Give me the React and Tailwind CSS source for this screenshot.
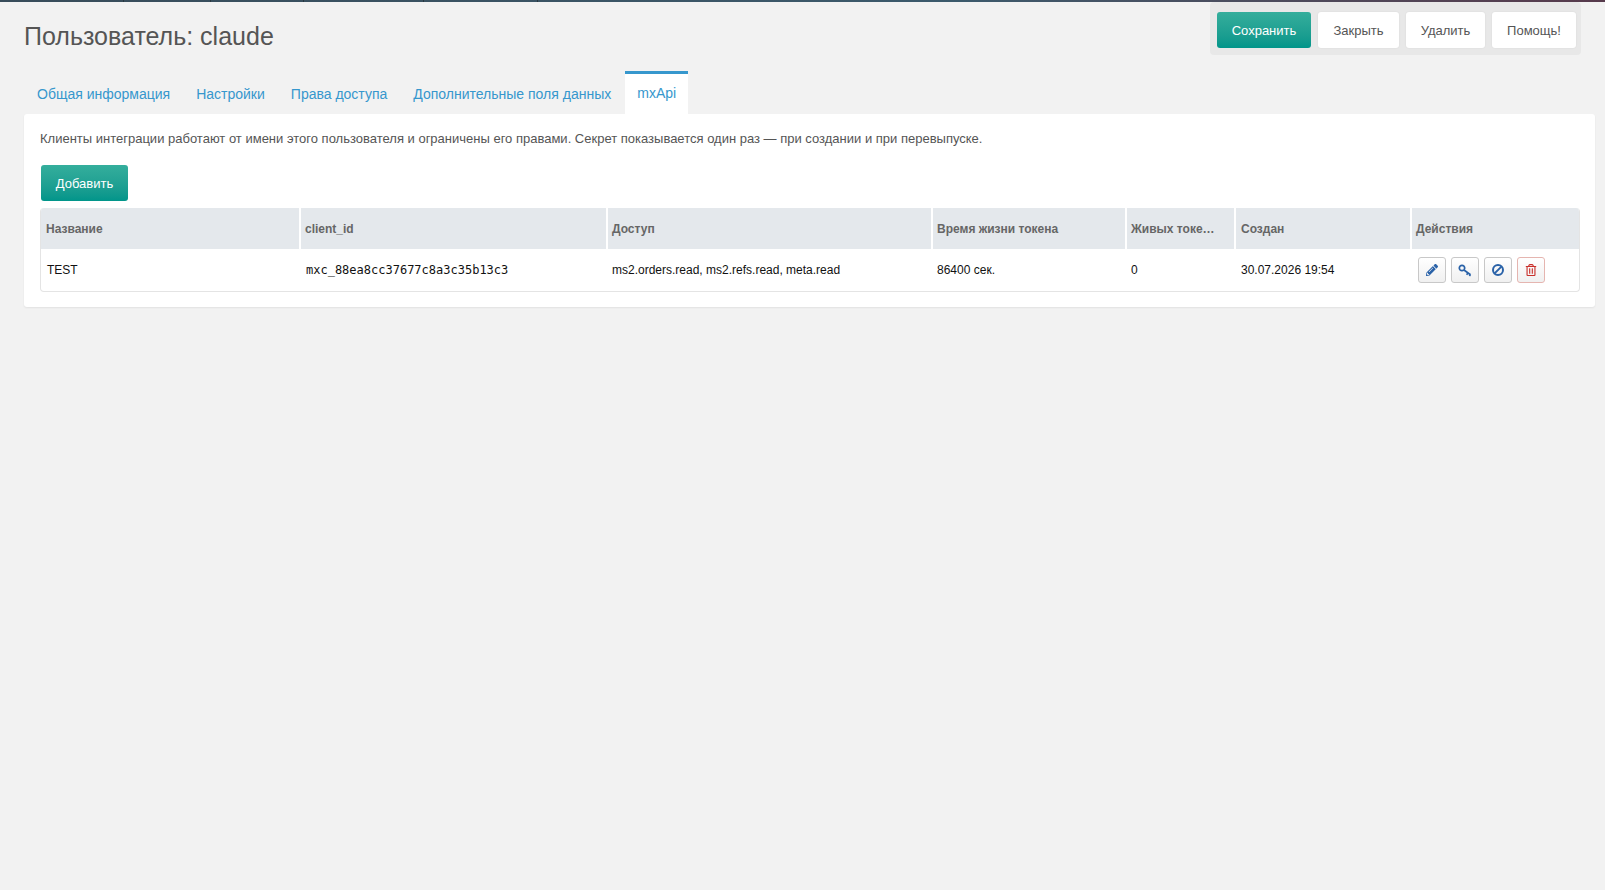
import React from "react";
import { FaPencilAlt, FaRegTrashAlt } from "react-icons/fa";
const Btn=({children,primary,cls=""})=>(
  <button className={`h-9 shrink-0 rounded-[3px] text-[13px] leading-none ${primary?"bg-gradient-to-b from-[#34ae9c] to-[#00958a] text-white":"bg-white text-[#555555] shadow-[0_0_2px_rgba(0,0,0,0.08)]"} ${cls}`}>{children}</button>
);
const IconBtn=({children,red})=>(
  <button className={`w-[28px] h-[26px] shrink-0 rounded-[3px] border flex items-center justify-center bg-gradient-to-b from-white to-[#f0f0f0] ${red?"border-[#e5b5b0]":"border-[#c8c8c8]"}`}>{children}</button>
);
const heads=[["Название","w-[260px] pl-[5px]"],["client_id","w-[307px] pl-[4px]"],["Доступ","w-[325px] pl-[4px]"],["Время жизни токена","w-[194px] pl-[4px]"],["Живых токе…","w-[109px] pl-[4px]"],["Создан","w-[176px] pl-[5px]"],["Действия","flex-1 pl-[4px]"]];
export default function App(){
  return (
    <div className="min-h-[890px] bg-[#f2f2f2] font-['Liberation_Sans',Arial,sans-serif] relative">
      <div className="h-[2px] flex bg-gradient-to-r from-[#384c5a] via-[#3c5a6c] via-60% to-[#573a4c]">
        {[124,87,93,120,114].map((w,i)=>(
          <div key={i} style={{width:w}} className="h-full border-r border-[#2a3840]"/>
        ))}
      </div>
      <div className="flex justify-between pl-6 pr-[24px]">
        <h1 className="text-[25px] leading-[30px] text-[#555555] mt-[19px]">Пользователь: claude</h1>
        <div className="flex gap-[7px] bg-[#e8e8e8] rounded-[4px] pt-[10px] pb-[7px] pl-[7px] pr-[5px] h-[53px] w-[371px]">
          <Btn primary cls="w-[94px]">Сохранить</Btn>
          <Btn cls="w-[81px]">Закрыть</Btn>
          <Btn cls="w-[79px]">Удалить</Btn>
          <Btn cls="w-[84px]">Помощь!</Btn>
        </div>
      </div>
      <div className="flex pl-6 mt-[16px] h-[43px] items-stretch text-[14px] text-[#3697cd]">
        <div className="w-[13px]"/>
        <div className="pt-[13px] mr-[26px]">Общая информация</div>
        <div className="pt-[13px] mr-[26px]">Настройки</div>
        <div className="pt-[13px] mr-[26px]">Права доступа</div>
        <div className="pt-[13px] mr-[14px]">Дополнительные поля данных</div>
        <div className="bg-white border-t-[3px] border-[#3697cd] px-[12px] pt-[9px]">mxApi</div>
      </div>
      <div className="ml-6 mr-[10px] bg-white rounded-[3px] shadow-[0_1px_2px_rgba(0,0,0,0.07)] px-[17px] pt-[17px] pb-[16px] h-[193px]">
        <p className="text-[13px] leading-[16px] text-[#555555] -ml-[1px]">Клиенты интеграции работают от имени этого пользователя и ограничены его правами. Секрет показывается один раз — при создании и при перевыпуске.</p>
        <Btn primary cls="w-[87px] mt-[18px] block">Добавить</Btn>
        <div className="mt-[7px] border border-[#e4e4e4] border-t-0 rounded-[4px] overflow-hidden h-[84px] text-[12px] -ml-[1px] -mr-[2px]">
          <div className="flex h-[41px] bg-[#e4e8ec] font-bold text-[#666666]">
            {heads.map(([h,w],i)=>(
              <div key={h} className={`${w} flex items-center ${i<6?"border-r-2 border-white":""}`}>{h}</div>
            ))}
          </div>
          <div className="flex h-[42px] items-center text-[#111111]">
            <div className="w-[259px] pl-[6px]">TEST</div>
            <div className="w-[307px] pl-[6px] font-['DejaVu_Sans_Mono',monospace]">mxc_88ea8cc37677c8a3c35b13c3</div>
            <div className="w-[325px] pl-[5px]">ms2.orders.read, ms2.refs.read, meta.read</div>
            <div className="w-[194px] pl-[5px]">86400 сек.</div>
            <div className="w-[109px] pl-[5px]">0</div>
            <div className="w-[176px] pl-[6px]">30.07.2026 19:54</div>
            <div className="flex-1 flex gap-[5px] pl-[7px]">
              <IconBtn><FaPencilAlt size={12} color="#2a62a8"/></IconBtn>
              <IconBtn><svg width="14" height="13" viewBox="0 0 14 13" fill="none"><circle cx="4" cy="4" r="2.7" stroke="#2a62a8" strokeWidth="1.7"/><path d="M6 6l6.5 4.8M10 9l-1.4 1.8M12.4 10.6l-1 1.4" stroke="#2a62a8" strokeWidth="1.7"/></svg></IconBtn>
              <IconBtn><svg width="12" height="12" viewBox="0 0 12 12" fill="none"><circle cx="6" cy="6" r="5" stroke="#2a62a8" strokeWidth="2"/><path d="M2.6 9.4L9.4 2.6" stroke="#2a62a8" strokeWidth="2"/></svg></IconBtn>
              <IconBtn red><FaRegTrashAlt size={12} color="#c9302c"/></IconBtn>
            </div>
          </div>
        </div>
      </div>
    </div>
  );
}
